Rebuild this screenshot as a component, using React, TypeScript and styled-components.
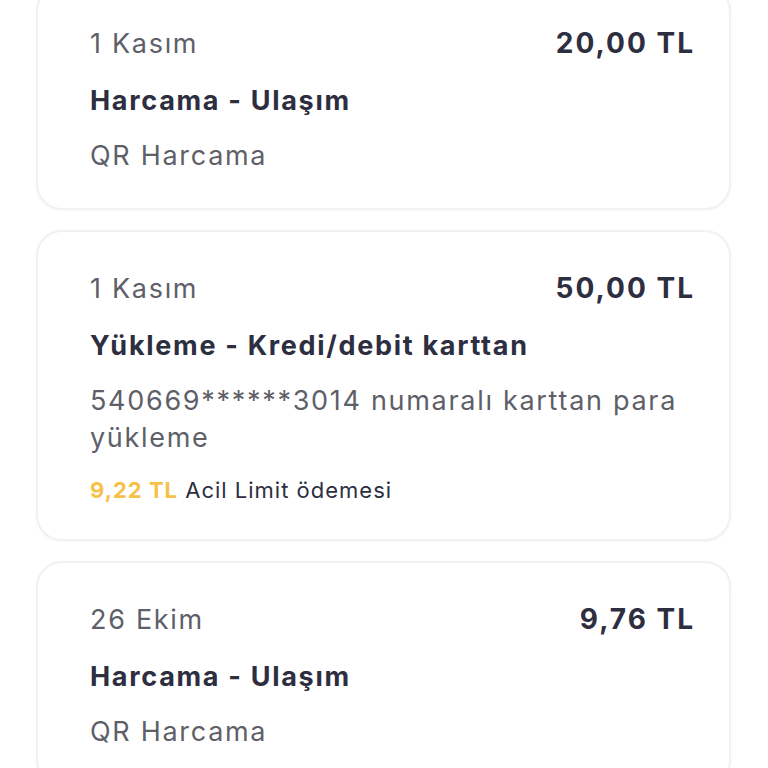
import React from "react";
import styled, { createGlobalStyle } from "styled-components";

const Global = createGlobalStyle`
  html, body { margin: 0; padding: 0; background: #ffffff; }
  body { font-family: "Inter", "Noto Sans", sans-serif; overflow: hidden; }
`;

const List = styled.div`
  display: flex;
  flex-direction: column;
  gap: 20px;
  padding: 0 37px 0 36px;
  margin-top: -15px;
`;

const Card = styled.div`
  background: #ffffff;
  border: 2px solid #f1f1f3;
  border-radius: 26px;
  box-shadow: 0 1px 3px rgba(0, 0, 0, 0.03);
  padding: 38px 36px 34px 52px;
  display: flex;
  flex-direction: column;
`;

const TopRow = styled.div`
  display: flex;
  justify-content: space-between;
  align-items: center;
  line-height: 37px;
`;

const DateText = styled.span`
  font-size: 27px;
  letter-spacing: 1.7px;
  color: #5e5f68;
  font-weight: 400;
`;

const Amount = styled.span`
  font-size: 28px;
  letter-spacing: 2px;
  margin-right: -2px;
  color: #2d2e40;
  font-weight: 700;
`;

const Title = styled.div`
  margin-top: 20px;
  font-size: 27px;
  letter-spacing: 1.7px;
  line-height: 37px;
  font-weight: 700;
  color: #2d2e40;
`;

const Desc = styled.div`
  margin-top: 18px;
  font-size: 27px;
  letter-spacing: 1.7px;
  line-height: 37px;
  color: #5e5f68;
`;

const Note = styled.div`
  margin-top: 19px;
  font-size: 22px;
  letter-spacing: 1px;
  line-height: 30px;
  color: #2d2e40;
`;

const NoteAmount = styled.span`
  color: #f6c148;
  font-weight: 700;
`;

type Tx = { date: string; amount: string; title: string; desc: string; note?: string };

const items: Tx[] = [
  { date: "1 Kasım", amount: "20,00 TL", title: "Harcama - Ulaşım", desc: "QR Harcama" },
  {
    date: "1 Kasım",
    amount: "50,00 TL",
    title: "Yükleme - Kredi/debit karttan",
    desc: "540669******3014 numaralı karttan para yükleme",
    note: "9,22 TL",
  },
  { date: "26 Ekim", amount: "9,76 TL", title: "Harcama - Ulaşım", desc: "QR Harcama" },
];

export default function App() {
  return (
    <>
      <Global />
      <List>
        {items.map((t, i) => (
          <Card key={i}>
            <TopRow>
              <DateText>{t.date}</DateText>
              <Amount>{t.amount}</Amount>
            </TopRow>
            <Title>{t.title}</Title>
            <Desc>{t.desc}</Desc>
            {t.note && (
              <Note>
                <NoteAmount>{t.note}</NoteAmount> Acil Limit ödemesi
              </Note>
            )}
          </Card>
        ))}
      </List>
    </>
  );
}
